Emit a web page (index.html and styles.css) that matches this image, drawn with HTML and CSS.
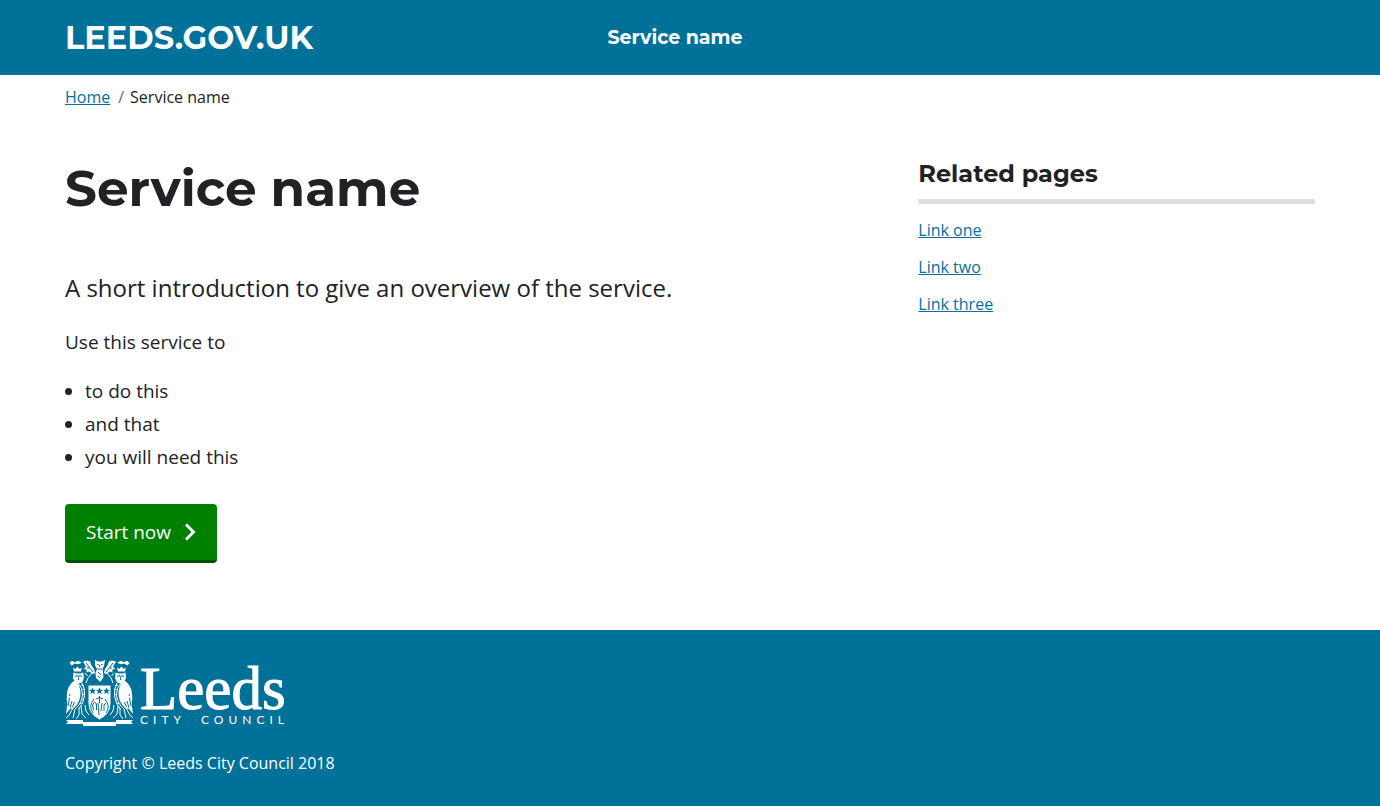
FILE: index.html
```html
<!DOCTYPE html>
<html lang="en">
<head>
<meta charset="utf-8">
<meta name="viewport" content="width=device-width, initial-scale=1">
<title>Service name</title>
<link rel="stylesheet" href="styles.css">
</head>
<body>
<header class="site-header">
  <div class="container site-header__inner">
    <a class="site-header__logo" href="#">LEEDS.GOV.UK</a>
    <a class="site-header__service" href="#">Service name</a>
  </div>
</header>
<div class="container page">
  <nav aria-label="Breadcrumb">
    <ol class="breadcrumb">
      <li><a class="link" href="#">Home</a></li>
      <li class="breadcrumb__current" aria-current="page">Service name</li>
    </ol>
  </nav>
  <div class="layout">
    <main class="content">
      <h1 class="title">Service name</h1>
      <p class="intro">A short introduction to give an overview of the service.</p>
      <p class="text">Use this service to</p>
      <ul class="list">
        <li>to do this</li>
        <li>and that</li>
        <li>you will need this</li>
      </ul>
      <button class="start" type="button">Start now
        <svg class="start__icon" viewBox="0 0 12 18" aria-hidden="true"><path d="M2 1.500 9.500 9 2 16.500"/></svg>
      </button>
    </main>
    <aside class="related">
      <h2 class="related__title">Related pages</h2>
      <ul class="related__list">
        <li><a class="link" href="#">Link one</a></li>
        <li><a class="link" href="#">Link two</a></li>
        <li><a class="link" href="#">Link three</a></li>
      </ul>
    </aside>
  </div>
</div>
<footer class="site-footer">
  <div class="container">
    <svg class="council" viewBox="0 0 232 66" role="img" aria-label="Leeds City Council">
      <defs>
        <g id="supporter">
          <path class="fill" d="M8 7.500l2.200 1.500 2.300-2.500L14.800 9 17 7.500l-1 4H9z"/>
          <path class="fill" d="M4.500 3 7 .8l3 1.500 3-1.500 4 2-4 1.500-3-.8-3.500 2z"/>
          <path class="fill" d="M8.500 12.500l3 1h4l3-1 .3 6-1.800 4-4 1-3.500-2L8 18z"/>
          <path class="cut" d="M10 16.500l2.500-1 1 2 1-2 2.500 1M13.500 18v2"/>
          <path class="fill" d="M9 21q-6 4-7 12-.8 6 .3 11L1 54l4-5 4-1q6-5 6.500-14 0-9-5-13z"/>
          <path class="cut" d="M4.500 38l-1.500 8M7 41l-2 7M9.500 42l-2 5M4 34l1 2"/>
          <path class="line" d="M13 23q5 5 4.500 12-1 9-7.500 14M17 23q3.500 6 2.500 13-1 8-6 13M16 25l3 1M17.500 29l2 1M18 34l2 1M17 39l2 1M15 43l2 1"/>
          <path class="line" d="M8 48 3.500 56 1 58M10 49l-2 9M14 48v7l-3 4M16 46l1 8 4 4M20 45l1 6 3 4"/>
          <path class="fill" d="M18 1.500 22 .5l3 1 1.500 4L29 9l1 4-2 1-4-2.500-2.500 1 .2-3L18.500 9l2.500-2z"/>
          <path class="line" d="M27 13l-4 5-2 5M20 13l2.500 3"/>
          <path class="cut" d="M21 3l3 4 4 5M22 8h2.500"/>
          <path class="fill" d="M1 60h17v4H1l2-2z"/>
        </g>
      </defs>
      <use href="#supporter"/>
      <use href="#supporter" transform="matrix(-1 0 0 1 69 0)"/>
      <path class="fill" d="M30 0l3 1.500h3.500L40 0l-1 6-1.500 3 1 8-3 5-4.500-4-.5-5 1.500-4-2-4z"/>
      <path class="cut" d="M32 4.500h1.500M36 4.500h1.500M34.500 5v2M32 9h5M33 12l3 3M33 16l2 2"/>
      <path class="shield" d="M23 25h23v19q0 10-11.500 16Q23 54 23 44z"/>
      <g class="stars">
        <path id="star" d="M27.500 27.500l1 2.300 2.500.2-1.900 1.600.6 2.500-2.200-1.300-2.200 1.300.6-2.500-1.900-1.600 2.500-.2z"/>
        <use href="#star" x="7"/>
        <use href="#star" x="14"/>
      </g>
      <path class="cut" d="M29 39q-6 7-1 14M40 39q6 7 1 14M28.500 50l-1-5 2-3 2 2v6M31 39q3.500-3 7 0M34.500 36v7M33 43l1 12M37 43l-1 8M39 51v-6l2-2"/>
      <path class="fill" d="M18 62h33v4H18z"/>
      <text class="council__name" x="75" y="49">Leeds</text>
      <text class="council__type" x="75" y="64">CITY</text>
      <text class="council__type" x="136" y="64">COUNCIL</text>
    </svg>
    <p class="copyright">Copyright © Leeds City Council 2018</p>
  </div>
</footer>
</body>
</html>
```
FILE: styles.css
```css
* { box-sizing: border-box; }
body { margin: 0; background: #fff; color: #212225; font-family: "Open Sans", sans-serif; font-size: 16px; line-height: 24px; }
h1, h2, p, ul, ol { margin: 0; padding: 0; }
.container { max-width: 1310px; margin: 0 auto; padding: 0 30px; }
.site-header { background: #007199; }
.site-header__inner { display: grid; grid-template-columns: 1fr auto 1fr; align-items: center; min-height: 75px; }
.site-header a { color: #fff; text-decoration: none; font-family: Montserrat, Inter, sans-serif; font-weight: 700; }
.site-header .site-header__logo { font-size: 32px; line-height: 40px; }
.site-header__service { padding-right: 30px; font-size: 19px; line-height: 32px; }
.link { color: #007199; text-decoration: underline; }
.breadcrumb { display: flex; padding-top: 10px; list-style: none; }
.breadcrumb__current::before { content: "/"; padding: 0 6px 0 8px; color: #5b6770; }
.layout { display: grid; grid-template-columns: repeat(12, 1fr); column-gap: 30px; padding: 50px 0 67px; }
.content { grid-column: span 8; }
.related { grid-column: span 4; }
.title { font-family: Montserrat, Inter, sans-serif; font-size: 50px; line-height: 60px; font-weight: 700; }
.intro { margin-top: 51px; font-size: 24px; line-height: 36px; }
.text { margin-top: 20px; font-size: 19px; line-height: 32px; }
.list { margin-top: 17px; padding-left: 20px; font-size: 19px; line-height: 33px; }
.start { display: inline-flex; align-items: center; gap: 13px; margin-top: 30px; padding: 13px 21px; border: 0; border-bottom: 3px solid #005000; border-radius: 4px; background: #008000; color: #fff; font-family: inherit; font-size: 19px; line-height: 30px; cursor: pointer; }
.start__icon { width: 12px; height: 18px; fill: none; stroke: #fff; stroke-width: 3; }
.related__title { padding-bottom: 10px; border-bottom: 5px solid #dedfdf; font-family: Montserrat, Inter, sans-serif; font-size: 24px; line-height: 30px; font-weight: 700; }
.related__list { display: grid; gap: 13px; padding-top: 14px; list-style: none; }
.site-footer { padding: 30px 0 31px; background: #007199; color: #fff; }
.council { display: block; width: 232px; height: 66px; overflow: visible; }
.fill, .shield { fill: #fff; }
.line { fill: none; stroke: #fff; stroke-width: 1; }
.cut { fill: none; stroke: #007199; stroke-width: 1; }
.shield { stroke: #007199; stroke-width: 1; }
.stars { fill: #007199; }
.council__name { fill: #fff; stroke: #fff; stroke-width: 1; font-family: "Liberation Serif", serif; font-size: 61px; }
.council__type { fill: #fff; font-family: Lato, sans-serif; font-size: 12px; letter-spacing: 5px; }
.copyright { margin-top: 25px; }
```
